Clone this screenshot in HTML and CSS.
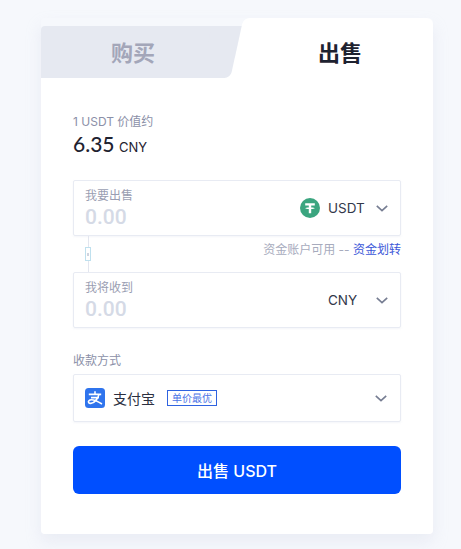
FILE: index.html
```html
<!DOCTYPE html>
<html lang="zh-CN">
<head>
<meta charset="utf-8">
<title>出售 USDT</title>
<link rel="stylesheet" href="styles.css">
</head>
<body>
<main class="card">
  <div class="tabs">
    <div class="tab tab-buy"><span class="tab-label">购买</span></div>
    <div class="tab tab-sell"><span class="tab-label">出售</span></div>
  </div>
  <div class="content">
    <div class="rate-label">1 USDT 价值约</div>
    <div class="rate-value"><span class="rate-num">6.35</span> <span class="rate-cur">CNY</span></div>

    <div class="field field-first">
      <div class="field-left">
        <div class="field-label">我要出售</div>
        <div class="field-amount">0.00</div>
      </div>
      <div class="field-right">
        <svg class="coin" viewBox="0 0 20 20" aria-hidden="true">
          <circle cx="10" cy="10" r="10" fill="#3ba57f"/>
          <path d="M5.200 5.200h9.600v2.200h-3.600v2.100c1.800.1 3.500.4 3.500.8s-1.700.7-3.500.8v4.100H8.800v-4.100c-1.800-.1-3.500-.4-3.500-.8s1.700-.7 3.500-.8V7.400H5.200z" fill="#fff"/>
        </svg>
        <span class="cur">USDT</span>
        <svg class="chev" viewBox="0 0 12 7" aria-hidden="true"><path d="M.8.8 6 5.600 11.200.8" fill="none" stroke="#767d92" stroke-width="1.600"/></svg>
      </div>
    </div>

    <div class="middle">
      <div class="link-col">
        <span class="link-line"></span>
        <span class="link-box"><i></i></span>
        <span class="link-line"></span>
      </div>
      <div class="avail">资金账户可用 -- <span class="avail-link">资金划转</span></div>
    </div>

    <div class="field">
      <div class="field-left">
        <div class="field-label">我将收到</div>
        <div class="field-amount">0.00</div>
      </div>
      <div class="field-right">
        <span class="cur">CNY</span>
        <svg class="chev" viewBox="0 0 12 7" aria-hidden="true"><path d="M.8.8 6 5.600 11.200.8" fill="none" stroke="#767d92" stroke-width="1.600"/></svg>
      </div>
    </div>

    <div class="pay-label">收款方式</div>
    <div class="pay">
      <div class="pay-left">
        <svg class="alipay" viewBox="0 0 20 20" aria-hidden="true">
          <rect width="20" height="20" rx="3.500" fill="#2f74ed"/>
          <path d="M3.800 6.400h12.400M10 3.200v3.200M14 6.400C13 10.500 9.500 15.200 5.800 15.400 3.600 15.500 2.900 13.800 3.900 12.700 5.400 11.100 10 11.800 17 16M6 9.600h8" fill="none" stroke="#fff" stroke-width="1.600"/>
        </svg>
        <span class="pay-name">支付宝</span>
        <span class="pay-tag">单价最优</span>
      </div>
      <svg class="chev" viewBox="0 0 12 7" aria-hidden="true"><path d="M.8.8 6 5.600 11.200.8" fill="none" stroke="#767d92" stroke-width="1.600"/></svg>
    </div>

    <button class="submit" type="button">出售 USDT</button>
  </div>
</main>
</body>
</html>
```
FILE: styles.css
```css
* { box-sizing: border-box; }
html, body { margin: 0; padding: 0; }
body {
  height: 549px;
  overflow: hidden;
  background: #f6f8fc;
  padding: 18px 28px 0 41px;
  font-family: "Inter", "Noto Sans CJK SC", sans-serif;
  color: #1e2230;
}
.card {
  width: 392px;
  height: 516px;
  border-radius: 4px;
  box-shadow: 0 8px 16px rgba(190, 198, 220, .22);
  display: flex;
  flex-direction: column;
}
.tabs {
  display: flex;
  height: 60px;
  align-items: flex-end;
  background: linear-gradient(#fff, #fff) left bottom / 100% 20px no-repeat;
}
.tab {
  font-family: "Noto Sans CJK SC", sans-serif;
  font-weight: 700;
  font-size: 22px;
  text-align: center;
  position: relative;
}
.tab-label { position: relative; z-index: 2; }
.tab-buy {
  width: 182px;
  height: 52px;
  margin-right: 8px;
  line-height: 50px;
  padding-left: 2px;
  background: #e6e9f1;
  border-radius: 4px 0 0 0;
  color: #a3a6b9;
  z-index: 1;
}
.tab-buy::after {
  content: "";
  position: absolute;
  left: 164.500px;
  top: 0;
  bottom: 0;
  width: 30px;
  background: #e6e9f1;
  border-radius: 0 0 6px 0;
  transform: skewX(-12.2deg);
}
.tab-sell {
  flex: 1;
  height: 60px;
  line-height: 66px;
  padding-left: 16px;
  background: linear-gradient(#fff, #fff) 30px 0 no-repeat;
  border-radius: 0 6px 0 0;
  color: #1e2230;
}
.tab-sell::before {
  content: "";
  position: absolute;
  left: 5.500px;
  top: 0;
  bottom: 0;
  width: 40px;
  background: #fff;
  border-radius: 6px 0 0 0;
  transform: skewX(-12.2deg);
}
.content {
  flex: 1;
  padding: 36px 32px 0;
  background: #fff;
  border-radius: 0 0 4px 4px;
}
.rate-label { font-size: 12px; line-height: 16px; color: #8b90a8; }
.rate-value { margin-top: 2px; line-height: 24px; color: #1e2230; }
.rate-num { font-family: "Lato", sans-serif; font-size: 21px; font-weight: 500; }
.rate-cur { font-size: 13px; }
.field {
  height: 56px;
  border: 1px solid #e8ebf3;
  border-radius: 2px;
  box-shadow: 0 1px 2px rgba(200, 206, 225, .2);
  display: flex;
  justify-content: space-between;
  align-items: center;
  padding: 0 12px 0 11px;
}
.field-first { margin-top: 21px; }
.field-label { font-size: 12px; line-height: 16px; color: #9a9eb2; }
.field-amount { font-family: "Roboto", sans-serif; font-size: 21px; font-weight: 500; line-height: 24px; color: #d5dae6; margin-top: 1px; }
.field-right { display: flex; align-items: center; }
.coin { width: 20px; height: 20px; margin-right: 8px; }
.cur { width: 48px; font-size: 13.500px; color: #33384a; }
.chev { width: 12px; height: 7px; flex: none; }
.middle { height: 36px; display: flex; justify-content: space-between; }
.link-col { display: flex; flex-direction: column; align-items: center; width: 6px; margin-left: 12px; }
.link-line { flex: 1; width: 1px; background: #e3e6ef; }
.link-box {
  width: 6px;
  height: 14px;
  border: 1px solid #bfe0ee;
  display: flex;
  align-items: center;
  justify-content: center;
}
.link-box i { width: 2px; height: 3px; background: #d0d4df; }
.avail { font-size: 12px; line-height: 25px; padding-top: 1px; color: #a7abbd; }
.avail-link { color: #3a56d8; }
.pay-label { margin-top: 25px; font-size: 12px; line-height: 16px; color: #8b90a8; }
.pay {
  margin-top: 5px;
  height: 48px;
  border: 1px solid #e8ebf3;
  border-radius: 2px;
  box-shadow: 0 1px 2px rgba(200, 206, 225, .2);
  display: flex;
  align-items: center;
  justify-content: space-between;
  padding: 0 13px 0 11px;
}
.pay-left { display: flex; align-items: center; }
.alipay { width: 20px; height: 20px; margin-right: 8px; }
.pay-name { font-size: 14px; color: #2b2f3f; margin-right: 12px; }
.pay-tag {
  width: 50px;
  height: 16px;
  border: 1px solid #2f63e0;
  font-size: 10px;
  line-height: 14px;
  text-align: center;
  color: #4a73e6;
}
.submit {
  display: block;
  width: 100%;
  height: 48px;
  margin-top: 24px;
  border: 0;
  border-radius: 6px;
  background: #004fff;
  color: #fff;
  font-family: "Inter", "Noto Sans CJK SC", sans-serif;
  font-size: 16px;
  font-weight: 500;
}
```
